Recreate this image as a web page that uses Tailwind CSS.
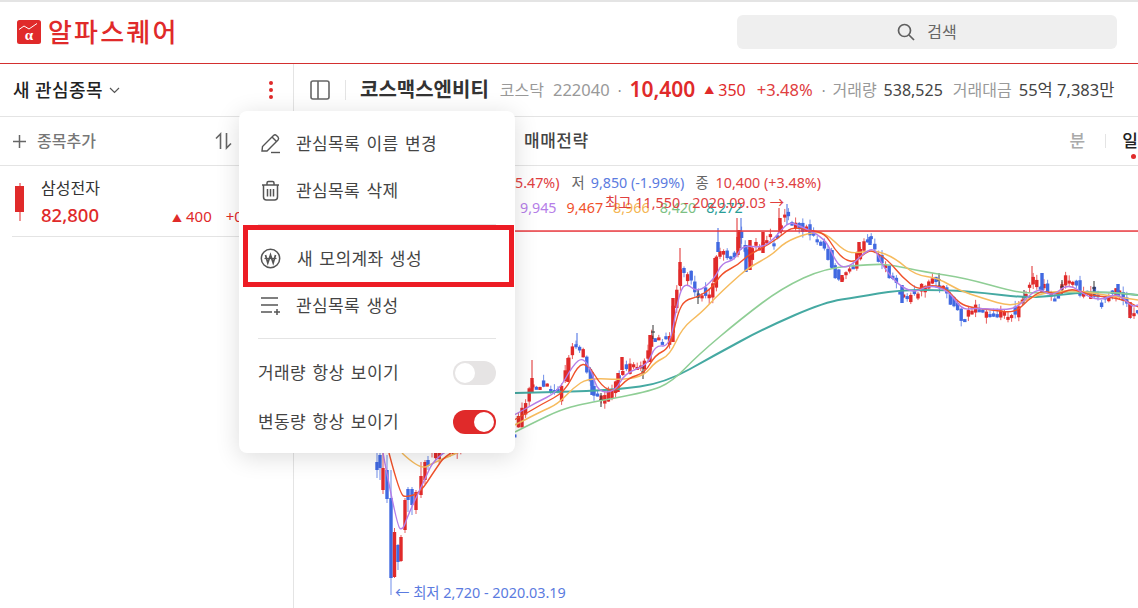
<!DOCTYPE html>
<html lang="ko">
<head>
  <meta charset="UTF-8" />
  <meta name="viewport" content="width=device-width, initial-scale=1.0" />
  <title>알파스퀘어</title>
  <script src="https://cdn.jsdelivr.net/npm/@tailwindcss/browser@4"></script>
</head>
<body class="bg-white font-['Noto_Sans','Noto_Sans_CJK_KR',sans-serif]">
  <div class="relative w-[1138px] h-[608px] overflow-hidden border-t-2 border-[#e4e4e4]">

    <!-- top bar -->
    <header class="h-[62px] border-b border-[#d32f2f] flex items-center justify-between pl-[17px] pr-[21px] pb-[1px]">
      <div class="flex items-center gap-[7px]">
        <svg width="24" height="24" viewBox="0 0 24 24">
          <rect width="24" height="24" rx="2.5" fill="#e02a2a" />
          <path d="M2 9.5 L7 6 L12 9 L20 3.5" fill="none" stroke="#fff" stroke-width="1" />
          <text x="12" y="20" text-anchor="middle" font-size="15" font-weight="700" fill="#fff" font-family="Liberation Serif">α</text>
        </svg>
        <span class="text-[26px] leading-none font-medium tracking-[2.2px] text-[#e02a2a]">알파스퀘어</span>
      </div>
      <div class="w-[380px] h-[34px] bg-[#efefef] rounded-md flex items-center justify-center gap-[12px] text-[16px] text-[#666]">
        <svg width="18" height="18" viewBox="0 0 18 18" fill="none" stroke="#5f5f5f" stroke-width="1.7">
          <circle cx="7.5" cy="7.5" r="6" />
          <path d="M12 12 L17 17" />
        </svg>
        <span>검색</span>
      </div>
    </header>

    <div class="flex h-[544px]">
      <!-- watchlist -->
      <aside class="w-[294px] shrink-0 border-r border-[#e4e4e4]">
        <div class="h-[53px] border-b border-[#e4e4e4] flex items-center justify-between pl-[13px] pr-[19px]">
          <div class="flex items-center gap-[6px]">
            <span class="text-[18px] tracking-[0.4px] font-medium text-[#222]">새 관심종목</span>
            <svg width="11" height="7" viewBox="0 0 11 7" fill="none" stroke="#555" stroke-width="1.2"><path d="M1 1 L5.5 5.5 L10 1" /></svg>
          </div>
          <svg width="6" height="20" viewBox="0 0 6 20" fill="#e02a2a">
            <circle cx="3" cy="3" r="2" /><circle cx="3" cy="10" r="2" /><circle cx="3" cy="17" r="2" />
          </svg>
        </div>
        <div class="h-[49px] border-b border-[#e4e4e4] flex items-center pl-[12px] pr-[61px]">
          <svg width="15" height="15" viewBox="0 0 15 15" stroke="#666" stroke-width="1.5"><path d="M7.5 1 V14 M1 7.5 H14" /></svg>
          <span class="ml-[10px] text-[16px] font-medium text-[#777]">종목추가</span>
          <svg class="ml-auto" width="17" height="18" viewBox="0 0 17 18" fill="none" stroke="#666" stroke-width="1.6">
            <path d="M5.5 17 V2 L1 6.5" /><path d="M11.5 1 V16 L16 11.5" />
          </svg>
        </div>
        <div class="ml-[12px] h-[71px] border-b border-[#e4e4e4] flex items-start relative">
          <svg class="absolute left-[3px] top-[17px]" width="10" height="38" viewBox="0 0 10 38" fill="#e02a2a">
            <rect x="4.5" width="1" height="38" /><rect y="3" width="9" height="26" />
          </svg>
          <div class="pl-[29px] pt-[11px]">
            <div class="text-[16px] leading-[22px] text-[#333]">삼성전자</div>
            <div class="flex items-baseline mt-[4px] text-[#e02a2a]">
              <span class="text-[18.5px] leading-[24px] font-medium">82,800</span>
              <span class="ml-[73px] text-[10px]">▲</span>
              <span class="ml-[4px] text-[15px]">400</span>
              <span class="ml-[14px] text-[15px]">+0.49%</span>
            </div>
          </div>
        </div>
      </aside>

      <!-- stock detail -->
      <main class="flex-1 min-w-0 flex flex-col">
        <div class="h-[53px] shrink-0 border-b border-[#e4e4e4] flex items-center pl-[16px] whitespace-nowrap">
          <svg width="20" height="20" viewBox="0 0 20 20" fill="none" stroke="#666" stroke-width="1.6">
            <rect x="1" y="1" width="18" height="18" rx="2" /><path d="M8 1 V19" />
          </svg>
          <span class="ml-[15px] w-px h-[20px] bg-[#e4e4e4]"></span>
          <span class="ml-[14px] text-[20px] font-semibold text-[#333]">코스맥스엔비티</span>
          <span class="ml-[11px] text-[16px] text-[#999]">코스닥</span>
          <span class="ml-[9px] text-[16.5px] text-[#999]">222040</span>
          <span class="ml-[8px] text-[14px] text-[#888]">·</span>
          <span class="ml-[8px] text-[21px] font-semibold text-[#e02a2a]">10,400</span>
          <span class="ml-[9px] text-[10px] text-[#e02a2a]">▲</span>
          <span class="ml-[4px] text-[16px] text-[#e02a2a]">350</span>
          <span class="ml-[11px] text-[16.5px] text-[#e0403f]">+3.48%</span>
          <span class="ml-[9px] text-[14px] text-[#888]">·</span>
          <span class="ml-[7px] text-[16px] text-[#999]">거래량</span>
          <span class="ml-[7px] text-[16px] text-[#444]">538,525</span>
          <span class="ml-[10px] text-[16px] text-[#999]">거래대금</span>
          <span class="ml-[7px] text-[16.5px] text-[#444]">55억 7,383만</span>
        </div>
        <div class="h-[49px] shrink-0 border-b border-[#e4e4e4] flex items-center relative whitespace-nowrap">
          <span class="ml-[230px] text-[17px] tracking-[0.5px] font-medium text-[#444]">매매전략</span>
          <span class="ml-[481px] text-[17px] font-medium text-[#aaa]">분</span>
          <span class="ml-[20px] w-px h-[14px] bg-[#e4e4e4]"></span>
          <span class="ml-[17px] text-[17px] font-medium text-[#222]">일</span>
          <span class="absolute left-[837px] top-[37px] w-[5px] h-[5px] rounded-full bg-[#e02a2a]"></span>
        </div>

        <div class="relative flex-1 overflow-hidden">
          <svg id="chart" class="absolute inset-0 blur-[0.3px]" width="844" height="442" viewBox="294 166 844 442"></svg>
          <div class="absolute top-[8px] left-[221px] flex text-[14.3px] leading-[18px] whitespace-nowrap">
            <span class="text-[#e0403f]">5.47%)</span>
            <span class="ml-[12px] text-[#666]">저</span>
            <span class="ml-[6px] text-[#5b7be0]">9,850 (-1.99%)</span>
            <span class="ml-[11px] text-[#666]">종</span>
            <span class="ml-[7px] text-[#e0403f]">10,400 (+3.48%)</span>
          </div>
          <div class="absolute top-[33px] left-[226px] flex gap-[10px] text-[14.3px] leading-[18px]">
            <span class="text-[#b57ee8]">9,945</span>
            <span class="text-[#f0512a]">9,467</span>
            <span class="text-[#f4b552]">8,966</span>
            <span class="text-[#7cc083]">8,420</span>
            <span class="text-[#2a9d96]">8,272</span>
          </div>
          <div class="absolute top-[28px] left-[311px] text-[14.4px] leading-[18px] text-[#e0403f] whitespace-nowrap">최고 11,550 - 2020.09.03 →</div>
          <div class="absolute top-[418px] left-[101px] text-[14.4px] leading-[18px] text-[#5b7be0] whitespace-nowrap">← 최저 2,720 - 2020.03.19</div>
        </div>
      </main>
    </div>

    <!-- watchlist menu -->
    <div class="absolute left-[239px] top-[109px] w-[276px] h-[342px] bg-white rounded-lg shadow-[0_4px_24px_rgba(0,0,0,0.14)] pt-[9px] text-[17px] tracking-[0.4px] [word-spacing:1.5px] text-[#444]">
      <div class="h-[47px] flex items-center pl-[21px]">
        <svg class="w-[21px]" width="21" height="21" viewBox="0 0 21 21" fill="none" stroke="#555" stroke-width="1.4">
          <path d="M2 18 L2.5 13.5 L13.5 2.5 Q15 1.2 16.5 2.5 L18 4 Q19.2 5.5 18 7 L7 18 Z" /><path d="M12 4 L16.5 8.5" /><path d="M11 19.5 H20" />
        </svg>
        <span class="ml-[15px]">관심목록 이름 변경</span>
      </div>
      <div class="h-[47px] flex items-center pl-[21px]">
        <svg class="w-[21px]" width="21" height="21" viewBox="0 0 21 21" fill="none" stroke="#555" stroke-width="1.5">
          <path d="M2 5 H19 M7 5 V3 Q7 1.5 8.5 1.5 H12.5 Q14 1.5 14 3 V5" /><path d="M3.5 5 V17 Q3.5 20 6.5 20 H14.5 Q17.5 20 17.5 17 V5" /><path d="M7.5 9 V16.5 M10.5 9 V16.5 M13.5 9 V16.5" />
        </svg>
        <span class="ml-[15px]">관심목록 삭제</span>
      </div>
      <div class="mt-[10px] mx-[19px] h-px bg-[#e4e4e4]"></div>
      <div class="mt-[10px] h-[47px] flex items-center pl-[21px]">
        <svg class="w-[21px]" width="21" height="21" viewBox="0 0 21 21" fill="none" stroke="#555">
          <circle cx="10.5" cy="10.5" r="9.2" stroke-width="1.5" />
          <path d="M5.5 7 L7.8 15 L10.5 7 L13.2 15 L15.5 7" stroke-width="1.7" /><path d="M4.5 10.5 H16.5" stroke-width="1.2" />
        </svg>
        <span class="ml-[16px]">새 모의계좌 생성</span>
      </div>
      <div class="h-[47px] flex items-center pl-[21px]">
        <svg class="w-[21px]" width="21" height="21" viewBox="0 0 21 21" fill="none" stroke="#555" stroke-width="1.5">
          <path d="M1 3 H18 M1 10 H18 M1 17 H12 M14 17 H20 M17 14 V20" />
        </svg>
        <span class="ml-[15px]">관심목록 생성</span>
      </div>
      <div class="mt-[9px] mx-[19px] h-px bg-[#e4e4e4]"></div>
      <div class="mt-[9px] h-[49px] flex items-center justify-between px-[19px]">
        <span>거래량 항상 보이기</span>
        <span class="w-[43px] h-[24px] rounded-full bg-[#e6e4e4] p-[2px] flex justify-start">
          <span class="w-[20px] h-[20px] rounded-full bg-white"></span>
        </span>
      </div>
      <div class="h-[49px] flex items-center justify-between px-[19px]">
        <span>변동량 항상 보이기</span>
        <span class="w-[43px] h-[24px] rounded-full bg-[#e02a2a] p-[2px] flex justify-end">
          <span class="w-[20px] h-[20px] rounded-full bg-white"></span>
        </span>
      </div>
      <!-- highlight box -->
      <div class="absolute left-[4px] top-[114px] w-[271px] h-[62px] border-[5px] border-[#ed1c24]"></div>
    </div>
  </div>

  <script>
    const svg = document.getElementById('chart');
    const NS = 'http://www.w3.org/2000/svg';
    const RED = '#e02a2a';
    const BLUE = '#4169e1';

    function add(tag, attrs) {
      const el = document.createElementNS(NS, tag);
      for (const k in attrs) el.setAttribute(k, attrs[k]);
      svg.appendChild(el);
    }

    // simple seeded random so the picture is the same every time
    let seed = 17;
    function rnd() {
      seed = (seed * 16807) % 2147483647;
      return seed / 2147483647;
    }

    // price path in page coordinates
    const path = [[432,455],[450,448],[480,442],[515,430],[532,385],[548,388],[558,395],[573,348],[583,352],[588,378],[597,398],[605,398],[618,378],[625,368],[642,368],[650,338],[662,342],[668,342],[673,308],[680,272],[688,278],[697,293],[712,290],[715,268],[718,245],[725,255],[735,255],[739,232],[747,258],[755,245],[762,252],[765,235],[775,242],[780,225],[785,215],[792,225],[808,230],[822,242],[832,267],[840,283],[845,270],[855,260],[862,247],[870,240],[878,257],[888,273],[900,293],[912,297],[928,280],[942,285],[952,303],[962,318],[972,308],[988,313],[1005,312],[1015,313],[1022,297],[1035,278],[1042,287],[1055,298],[1065,280],[1075,283],[1083,297],[1095,292],[1102,303],[1115,290],[1118,287],[1130,313],[1140,307]];

    function priceAt(x) {
      for (let i = 1; i < path.length; i++) {
        if (x <= path[i][0]) {
          const a = path[i - 1], b = path[i];
          return a[1] + (b[1] - a[1]) * (x - a[0]) / (b[0] - a[0]);
        }
      }
      return path[path.length - 1][1];
    }

    function candle(x, top, bottom, hi, lo, color) {
      add('rect', { x: x - 0.5, y: hi, width: 1, height: lo - hi, fill: color, opacity: 0.75 });
      add('rect', { x: x - 1.7, y: top, width: 3.4, height: Math.max(bottom - top, 3), fill: color });
    }

    // the crash at the left edge, read off one by one
    const first = [[377,462,470,450,478,BLUE],[380,455,468,448,480,BLUE],[383,468,490,452,494,RED],[387,470,499,455,503,BLUE],[391,498,578,470,595,BLUE],[394.5,532,577,528,578,RED],[398,545,562,544,570,BLUE],[401,537,561,535,562,RED],[405,500,530,498,533,RED],[408,489,500,487,512,BLUE],[412,489,505,487,515,BLUE],[416,492,510,490,514,RED],[421,476,495,462,498,RED],[425,462,480,460,484,RED],[428,460,466,456,470,BLUE]];
    first.forEach(c => candle(c[0], c[1], c[2], c[3], c[4], c[5]));

    // everything after it
    for (let x = 432; x < 1140; x += 3.6) {
      const c = priceAt(x) + (rnd() - 0.5) * 10;
      const o = priceAt(x - 3.6) + (rnd() - 0.5) * 14;
      const top = Math.min(c, o), bottom = Math.max(c, o);
      candle(x, top, bottom, top - rnd() * 6, bottom + rnd() * 6, c < o ? RED : BLUE);
    }

    // the big bodies that stand out
    [[532,378,392,RED],[568,358,382,RED],[592,372,395,BLUE],[618,373,392,RED],[622,357,370,RED],[650,335,362,RED],[673,298,342,RED],[680,262,285,RED],[715,258,282,RED],[718,242,252,BLUE],[739,230,248,RED],[746,245,272,BLUE],[750,240,270,RED],[763,232,253,RED],[780,218,233,RED],[832,250,268,BLUE],[842,275,282,RED],[859,242,255,RED],[870,237,245,BLUE],[902,285,303,BLUE],[1042,273,293,BLUE],[1118,284,297,BLUE],[1130,302,318,RED]].forEach(b => {
      add('rect', { x: b[0] - 1.7, y: b[1], width: 3.4, height: b[2] - b[1], fill: b[3] });
    });

    // long wicks and dojis
    [[718,228,250,BLUE],[737,218,250,RED],[741,218,250,BLUE],[787,204,225,BLUE],[779,208,230,RED],[680,248,275,RED],[577,333,345,BLUE],[532,360,385,RED],[1032,266,285,RED]].forEach(w => {
      add('rect', { x: w[0] - 0.5, y: w[1], width: 1, height: w[2] - w[1], fill: w[3] });
    });
    [[601,400],[643,372],[653,332],[698,297],[939,280],[1024,297],[1062,287],[1094,288]].forEach(p => {
      add('path', { d: `M${p[0]} ${p[1] - 7}V${p[1] + 7}M${p[0] - 2} ${p[1]}H${p[0] + 2}`, stroke: '#333', fill: 'none' });
    });

    // moving averages, rounded through the midpoints of the read-off points
    function smooth(str) {
      const p = str.split(' ').map(s => s.split(',').map(Number));
      let d = `M${p[0][0]} ${p[0][1]}`;
      for (let i = 1; i < p.length - 1; i++) {
        d += `Q${p[i][0]} ${p[i][1]} ${(p[i][0] + p[i + 1][0]) / 2} ${(p[i][1] + p[i + 1][1]) / 2}`;
      }
      const last = p[p.length - 1];
      return d + `L${last[0]} ${last[1]}`;
    }
    const lines = [
      ['#45a9a2', 2, '515,393 558,392 615,390 665,383 715,355 765,328 825,302 858,297 898,290 948,290 985,293 1018,297 1042,297 1075,293 1108,292 1138,295'],
      ['#8fce95', 1.6, '515,432 535,422 560,410 582,404 648,392 672,382 698,355 742,318 782,288 825,268 875,264 892,265 925,272 965,278 1015,292 1032,293 1058,292 1108,292 1138,295'],
      ['#f6bb5e', 1.5, '402,453 420,470 433,463 457,453 515,425 540,412 558,404 573,388 588,378 625,380 645,375 655,362 670,355 682,328 702,312 715,298 732,282 748,268 772,255 785,242 808,233 825,232 845,252 858,253 875,250 895,258 915,275 938,278 958,290 982,298 1012,307 1032,297 1045,293 1072,290 1092,293 1118,297 1138,300'],
      ['#f0512a', 1.4, '389,453 400,495 407,497 420,493 435,470 447,453 515,420 542,404 565,392 578,365 588,364 602,387 615,392 628,378 645,373 655,355 670,348 678,312 685,300 698,297 712,288 722,273 738,265 748,255 768,245 782,235 792,227 808,230 825,233 835,250 845,260 855,262 865,253 872,250 888,260 902,277 918,290 928,285 945,287 958,302 968,307 992,310 1015,313 1028,300 1042,290 1058,295 1072,288 1088,295 1108,297 1125,300 1138,307'],
      ['#b57ee8', 1.4, '383,453 397,527 403,530 408,515 423,483 437,453 515,415 535,403 558,392 573,365 583,357 592,372 598,392 615,392 625,373 648,365 655,345 670,347 678,298 685,282 698,293 715,278 722,263 735,260 742,245 762,248 775,238 788,222 798,225 825,238 835,260 842,268 852,265 865,252 875,248 882,265 898,285 915,293 928,285 948,290 962,310 975,308 1005,310 1018,307 1038,287 1052,297 1068,283 1088,297 1102,300 1118,293 1132,307 1138,305']
    ];
    lines.forEach(l => {
      add('path', { d: smooth(l[2]), fill: 'none', stroke: l[0], 'stroke-width': l[1] });
    });

    // all time high line
    add('rect', { x: 294, y: 230.3, width: 844, height: 1.5, fill: '#e8373c' });
  </script>
</body>
</html>
